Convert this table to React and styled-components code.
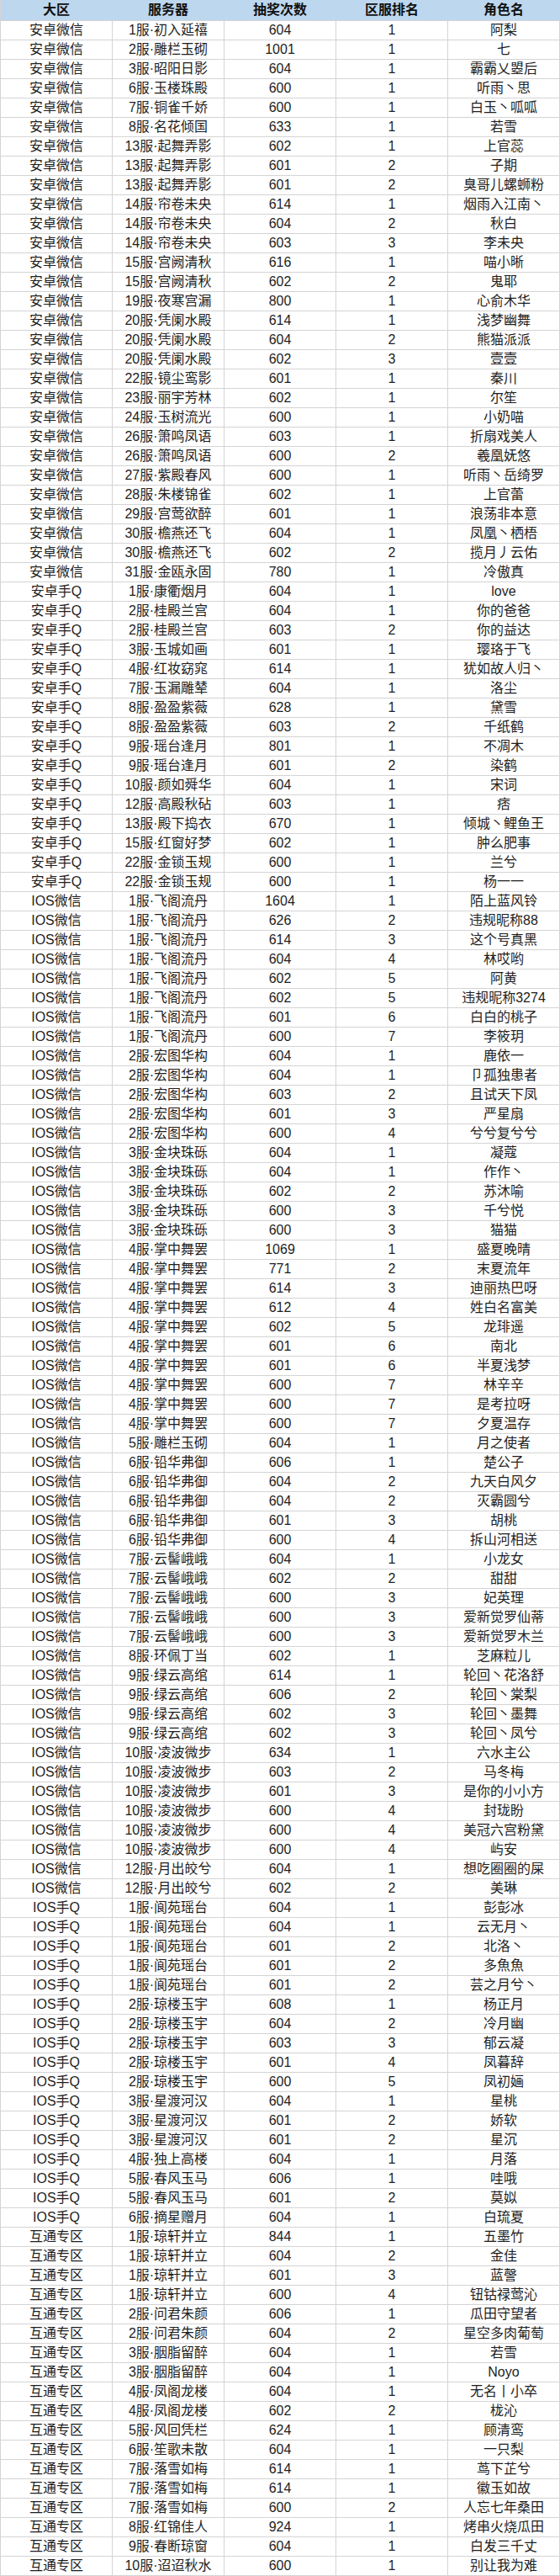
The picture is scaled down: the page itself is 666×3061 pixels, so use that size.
import React from 'react';
import styled, { createGlobalStyle } from 'styled-components';

const GlobalStyle = createGlobalStyle`
  html, body {
    margin: 0;
    padding: 0;
    background: #ffffff;
  }
  body {
    font-family: 'Liberation Sans', 'Noto Sans CJK SC', sans-serif;
  }
`;

const Sheet = styled.div`
  width: 666px;
  border-left: 1px solid #d4d4d4;
  box-sizing: border-box;
`;

const Row = styled.div`
  display: grid;
  grid-template-columns: repeat(5, 1fr);
  height: ${(p) => (p.$head ? '25px' : '23px')};
  background: ${(p) => (p.$head ? '#bdd7ee' : '#ffffff')};
  border-bottom: 1px solid #d4d4d4;
  box-sizing: border-box;
`;

const Cell = styled.div`
  display: flex;
  align-items: center;
  justify-content: center;
  border-right: 1px solid ${(p) => (p.$head ? '#bdd7ee' : '#d4d4d4')};
  font-size: 16px;
  font-weight: ${(p) => (p.$head ? 700 : 400)};
  color: ${(p) => (p.$head ? '#111111' : '#1e1e1e')};
  white-space: nowrap;
  overflow: hidden;
  line-height: 20px;
`;

const HEAD = ['大区', '服务器', '抽奖次数', '区服排名', '角色名'];

// [大区, [[服务器, 抽奖次数, 区服排名, 角色名], ...]]
const GROUPS = [
  ['安卓微信', [
    ['1服·初入延禧', 604, 1, '阿梨'],
    ['2服·雕栏玉砌', 1001, 1, '七'],
    ['3服·昭阳日影', 604, 1, '霸霸乂曌后'],
    ['6服·玉楼珠殿', 600, 1, '听雨丶思'],
    ['7服·铜雀千娇', 600, 1, '白玉丶呱呱'],
    ['8服·名花倾国', 633, 1, '若雪'],
    ['13服·起舞弄影', 602, 1, '上官蕊'],
    ['13服·起舞弄影', 601, 2, '子期'],
    ['13服·起舞弄影', 601, 2, '臭哥儿螺蛳粉'],
    ['14服·帘卷未央', 614, 1, '烟雨入江南丶'],
    ['14服·帘卷未央', 604, 2, '秋白'],
    ['14服·帘卷未央', 603, 3, '李未央'],
    ['15服·宫阙清秋', 616, 1, '喵小晰'],
    ['15服·宫阙清秋', 602, 2, '鬼耶'],
    ['19服·夜寒宫漏', 800, 1, '心俞木华'],
    ['20服·凭阑水殿', 614, 1, '浅梦幽舞'],
    ['20服·凭阑水殿', 604, 2, '熊猫派派'],
    ['20服·凭阑水殿', 602, 3, '壹壹'],
    ['22服·镜尘鸾影', 601, 1, '秦川'],
    ['23服·丽宇芳林', 602, 1, '尔笙'],
    ['24服·玉树流光', 600, 1, '小奶喵'],
    ['26服·箫鸣凤语', 603, 1, '折扇戏美人'],
    ['26服·箫鸣凤语', 600, 2, '羲凰妩悠'],
    ['27服·紫殿春风', 600, 1, '听雨丶岳绮罗'],
    ['28服·朱楼锦雀', 602, 1, '上官蕾'],
    ['29服·宫莺欲醉', 601, 1, '浪荡非本意'],
    ['30服·檐燕还飞', 604, 1, '凤凰丶栖梧'],
    ['30服·檐燕还飞', 602, 2, '揽月丿云佑'],
    ['31服·金瓯永固', 780, 1, '冷傲真'],
  ]],
  ['安卓手Q', [
    ['1服·康衢烟月', 604, 1, 'love'],
    ['2服·桂殿兰宫', 604, 1, '你的爸爸'],
    ['2服·桂殿兰宫', 603, 2, '你的益达'],
    ['3服·玉城如画', 601, 1, '璎珞于飞'],
    ['4服·红妆窈窕', 614, 1, '犹如故人归丶'],
    ['7服·玉漏雕辇', 604, 1, '洛尘'],
    ['8服·盈盈紫薇', 628, 1, '黛雪'],
    ['8服·盈盈紫薇', 603, 2, '千纸鹤'],
    ['9服·瑶台逢月', 801, 1, '不凋木'],
    ['9服·瑶台逢月', 601, 2, '染鹤'],
    ['10服·颜如舜华', 604, 1, '宋词'],
    ['12服·高殿秋砧', 603, 1, '痞'],
    ['13服·殿下捣衣', 670, 1, '倾城丶鲤鱼王'],
    ['15服·红窗好梦', 602, 1, '肿么肥事'],
    ['22服·金锁玉规', 600, 1, '兰兮'],
    ['22服·金锁玉规', 600, 1, '杨一一'],
  ]],
  ['IOS微信', [
    ['1服·飞阁流丹', 1604, 1, '陌上蓝风铃'],
    ['1服·飞阁流丹', 626, 2, '违规昵称88'],
    ['1服·飞阁流丹', 614, 3, '这个号真黑'],
    ['1服·飞阁流丹', 604, 4, '林哎哟'],
    ['1服·飞阁流丹', 602, 5, '阿黄'],
    ['1服·飞阁流丹', 602, 5, '违规昵称3274'],
    ['1服·飞阁流丹', 601, 6, '白白的桃子'],
    ['1服·飞阁流丹', 600, 7, '李筱玥'],
    ['2服·宏图华构', 604, 1, '鹿依一'],
    ['2服·宏图华构', 604, 1, '卩孤独患者'],
    ['2服·宏图华构', 603, 2, '且试天下凤'],
    ['2服·宏图华构', 601, 3, '严星扇'],
    ['2服·宏图华构', 600, 4, '兮兮复兮兮'],
    ['3服·金块珠砾', 604, 1, '凝蔻'],
    ['3服·金块珠砾', 604, 1, '作作丶'],
    ['3服·金块珠砾', 602, 2, '苏沐喻'],
    ['3服·金块珠砾', 600, 3, '千兮悦'],
    ['3服·金块珠砾', 600, 3, '猫猫'],
    ['4服·掌中舞罢', 1069, 1, '盛夏晚晴'],
    ['4服·掌中舞罢', 771, 2, '末夏流年'],
    ['4服·掌中舞罢', 614, 3, '迪丽热巴呀'],
    ['4服·掌中舞罢', 612, 4, '姓白名富美'],
    ['4服·掌中舞罢', 602, 5, '龙琲遥'],
    ['4服·掌中舞罢', 601, 6, '南北'],
    ['4服·掌中舞罢', 601, 6, '半夏浅梦'],
    ['4服·掌中舞罢', 600, 7, '林辛辛'],
    ['4服·掌中舞罢', 600, 7, '是考拉呀'],
    ['4服·掌中舞罢', 600, 7, '夕夏温存'],
    ['5服·雕栏玉砌', 604, 1, '月之使者'],
    ['6服·铅华弗御', 606, 1, '楚公子'],
    ['6服·铅华弗御', 604, 2, '九天白风夕'],
    ['6服·铅华弗御', 604, 2, '灭霸圆兮'],
    ['6服·铅华弗御', 601, 3, '胡桃'],
    ['6服·铅华弗御', 600, 4, '拆山河相送'],
    ['7服·云髻峨峨', 604, 1, '小龙女'],
    ['7服·云髻峨峨', 602, 2, '甜甜'],
    ['7服·云髻峨峨', 600, 3, '妃英理'],
    ['7服·云髻峨峨', 600, 3, '爱新觉罗仙蒂'],
    ['7服·云髻峨峨', 600, 3, '爱新觉罗木兰'],
    ['8服·环佩丁当', 602, 1, '芝麻粒儿'],
    ['9服·绿云高绾', 614, 1, '轮回丶花洛舒'],
    ['9服·绿云高绾', 606, 2, '轮回丶棠梨'],
    ['9服·绿云高绾', 602, 3, '轮回丶墨舞'],
    ['9服·绿云高绾', 602, 3, '轮回丶凤兮'],
    ['10服·凌波微步', 634, 1, '六水主公'],
    ['10服·凌波微步', 603, 2, '马冬梅'],
    ['10服·凌波微步', 601, 3, '是你的小小方'],
    ['10服·凌波微步', 600, 4, '封珑盼'],
    ['10服·凌波微步', 600, 4, '美冠六宫粉黛'],
    ['10服·凌波微步', 600, 4, '屿安'],
    ['12服·月出皎兮', 604, 1, '想吃圈圈的屎'],
    ['12服·月出皎兮', 602, 2, '美琳'],
  ]],
  ['IOS手Q', [
    ['1服·阆苑瑶台', 604, 1, '彭彭冰'],
    ['1服·阆苑瑶台', 604, 1, '云无月丶'],
    ['1服·阆苑瑶台', 601, 2, '北洛丶'],
    ['1服·阆苑瑶台', 601, 2, '多魚魚'],
    ['1服·阆苑瑶台', 601, 2, '芸之月兮丶'],
    ['2服·琼楼玉宇', 608, 1, '杨正月'],
    ['2服·琼楼玉宇', 604, 2, '冷月幽'],
    ['2服·琼楼玉宇', 603, 3, '郁云凝'],
    ['2服·琼楼玉宇', 601, 4, '凤暮辞'],
    ['2服·琼楼玉宇', 600, 5, '凤初婳'],
    ['3服·星渡河汉', 604, 1, '星桃'],
    ['3服·星渡河汉', 601, 2, '娇软'],
    ['3服·星渡河汉', 601, 2, '星沉'],
    ['4服·独上高楼', 604, 1, '月落'],
    ['5服·春风玉马', 606, 1, '哇哦'],
    ['5服·春风玉马', 601, 2, '莫姒'],
    ['6服·摘星赠月', 604, 1, '白琉夏'],
  ]],
  ['互通专区', [
    ['1服·琼轩并立', 844, 1, '五墨竹'],
    ['1服·琼轩并立', 604, 2, '金佳'],
    ['1服·琼轩并立', 601, 3, '蓝謦'],
    ['1服·琼轩并立', 600, 4, '钮钴禄莺沁'],
    ['2服·问君朱颜', 606, 1, '瓜田守望者'],
    ['2服·问君朱颜', 604, 2, '星空多肉葡萄'],
    ['3服·胭脂留醉', 604, 1, '若雪'],
    ['3服·胭脂留醉', 604, 1, 'Noyo'],
    ['4服·凤阁龙楼', 604, 1, '无名丨小卒'],
    ['4服·凤阁龙楼', 602, 2, '栊沁'],
    ['5服·风回凭栏', 624, 1, '顾清鸾'],
    ['6服·笙歌未散', 604, 1, '一只梨'],
    ['7服·落雪如梅', 614, 1, '茑下芷兮'],
    ['7服·落雪如梅', 614, 1, '徽玉如故'],
    ['7服·落雪如梅', 600, 2, '人忘七年桑田'],
    ['8服·红锦佳人', 924, 1, '烤串火烧瓜田'],
    ['9服·春断琼窗', 604, 1, '白发三千丈'],
    ['10服·迢迢秋水', 600, 1, '别让我为难'],
  ]],
];

const ROWS = GROUPS.flatMap(([region, list]) =>
  list.map(([server, count, rank, name]) => [region, server, count, rank, name])
);

export default function App() {
  return (
    <>
      <GlobalStyle />
      <Sheet>
        <Row $head>
          {HEAD.map((h) => (
            <Cell key={h} $head>{h}</Cell>
          ))}
        </Row>
        {ROWS.map((r, i) => (
          <Row key={i}>
            {r.map((v, j) => (
              <Cell key={j}>{v}</Cell>
            ))}
          </Row>
        ))}
      </Sheet>
    </>
  );
}
